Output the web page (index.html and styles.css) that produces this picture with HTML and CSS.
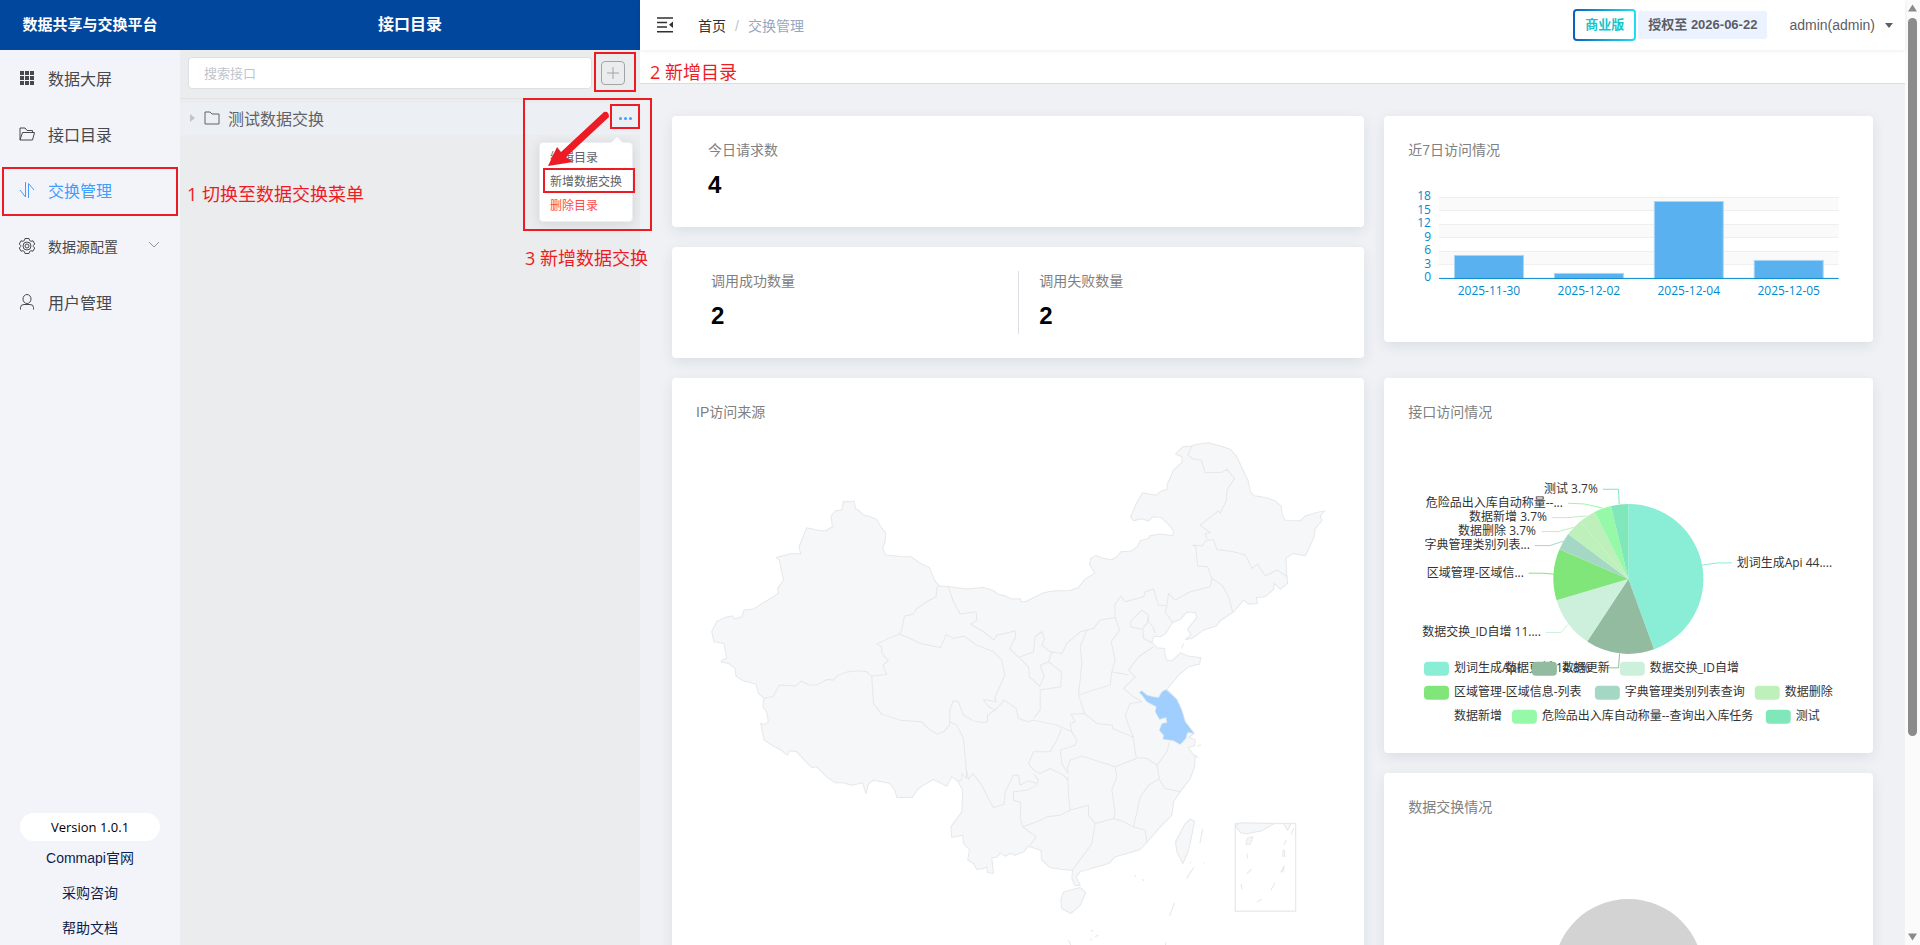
FILE: index.html
```html
<!DOCTYPE html>
<html lang="zh-CN">
<head>
  <meta charset="utf-8">
  <title>数据共享与交换平台</title>
  <link rel="stylesheet" href="styles.css">
</head>
<body>
  <div class="app">
    <aside class="sidebar">
      <h1 class="brand">数据共享与交换平台</h1>
      <nav class="menu">
        <a class="menu-item" href="#">
          <svg class="icon" viewBox="0 0 16 16" fill="currentColor"><path d="M1 1h4v4H1zM6 1h4v4H6zM11 1h4v4h-4zM1 6h4v4H1zM6 6h4v4H6zM11 6h4v4h-4zM1 11h4v4H1zM6 11h4v4H6zM11 11h4v4h-4z"/></svg>
          数据大屏
        </a>
        <a class="menu-item" href="#">
          <svg class="icon" viewBox="0 0 16 16" fill="none" stroke="currentColor"><path d="M1 14V2h5l2 2.500h5.500V6.500M1 14l2.500-7.500h12L13.500 14z"/></svg>
          接口目录
        </a>
        <a class="menu-item active" href="#">
          <svg class="icon" viewBox="0 0 16 16" fill="none" stroke="currentColor"><path d="M6.500 0v15L1 8M9.500 16V1.500L15 8"/></svg>
          交换管理
        </a>
        <a class="menu-item small" href="#">
          <svg class="icon" viewBox="0 0 16 16" fill="none" stroke="currentColor"><path d="M6 .5h4l.6 2 1.400.8 2-.5 1.700 3.200L14.300 7.500v1l1.400 1.500-1.700 3.200-2-.5-1.400.8-.6 2H6l-.6-2-1.400-.8-2 .5L.3 10l1.400-1.500v-1L.3 6 2 2.800l2 .5 1.400-.8z"/><circle cx="8" cy="8" r="4"/><circle cx="8" cy="8" r="2"/></svg>
          数据源配置
          <svg class="arrow" viewBox="0 0 12 12" fill="none" stroke="currentColor"><path d="M1 2l5 5 5-5"/></svg>
        </a>
        <a class="menu-item" href="#">
          <svg class="icon" viewBox="0 0 16 16" fill="none" stroke="currentColor"><ellipse cx="8" cy="5" rx="4" ry="4.500"/><path d="M1.500 15.500v-2q0-3 3.500-3h6q3.500 0 3.500 3v2"/></svg>
          用户管理
        </a>
      </nav>
      <div class="links">
        <span class="version">Version 1.0.1</span>
        <a href="#">Commapi官网</a>
        <a href="#">采购咨询</a>
        <a href="#">帮助文档</a>
      </div>
    </aside>

    <section class="tree">
      <h2 class="tree-title">接口目录</h2>
      <div class="tree-search">
        <input type="text" placeholder="搜索接口" aria-label="搜索接口">
        <button class="add" aria-label="新增目录">
          <svg viewBox="0 0 12 12" stroke="currentColor"><path d="M6 0v12M0 6h12"/></svg>
        </button>
      </div>
      <div class="tree-row">
        <span class="caret"></span>
        <svg class="folder" viewBox="0 0 16 14" fill="none" stroke="currentColor"><path d="M1 13V1h5l2 2h7v10z"/></svg>
        <span class="name">测试数据交换</span>
        <button class="more" aria-label="更多"><i></i><i></i><i></i></button>
        <div class="popover">
          <button>编辑目录</button>
          <button>新增数据交换</button>
          <button class="danger">删除目录</button>
        </div>
      </div>
    </section>

    <main class="main">
      <header class="navbar">
        <button class="fold" aria-label="收起菜单">
          <svg viewBox="0 0 16 16" fill="none" stroke="currentColor" stroke-width="1.500"><path d="M0 1h16M0 5.500h10M0 10h10M0 14.800h16"/><path d="M16 4.500v6.500l-4-3.200z" fill="currentColor" stroke="none"/></svg>
        </button>
        <div class="breadcrumb"><a href="#">首页</a><span class="slash">/</span><span>交换管理</span></div>
        <span class="edition">商业版</span>
        <span class="license">授权至 2026-06-22</span>
        <button class="user">admin(admin)<span class="down"></span></button>
      </header>
      <div class="tabs"></div>

      <div class="board">
        <div class="column">
          <div class="card stats">
            <div class="stat"><p>今日请求数</p><strong>4</strong></div>
          </div>
          <div class="card stats pair">
            <div class="stat"><p>调用成功数量</p><strong>2</strong></div>
            <div class="stat"><p>调用失败数量</p><strong>2</strong></div>
          </div>
          <div class="card">
            <h3>IP访问来源</h3>
            <svg class="map" viewBox="-12 -24 1932 1620">
              <path class="land" d="M430 213L435 217 440 213 450 216 462 213 466 235 478 243 490 255 512 261 530 268 545 295 557 308 555 335 548 355 556 374 600 379 632 380 670 405 688 412 703 450 718 468 744 469 800 477 850 472 880 482 895 493 915 497 935 507 960 506 963 514 976 515 1030 488 1060 483 1110 481 1135 472 1155 447 1184 429 1168 403 1172 385 1188 376 1205 384 1235 389 1250 380 1262 365 1295 363 1312 349 1320 332 1345 325 1347 318 1380 312 1418 317 1420 302 1405 283 1382 262 1358 260 1345 273 1325 266 1300 272 1291 261 1308 222 1327 188 1367 196 1385 182 1403 177 1400 165 1420 120 1445 98 1446 80 1426 72 1448 50 1473 48 1490 43 1525 38 1560 48 1590 58 1610 80 1628 120 1643 150 1650 185 1662 197 1700 203 1725 213 1743 228 1745 250 1755 271 1800 272 1815 258 1850 247 1873 243 1860 258 1865 272 1845 295 1840 325 1815 377 1780 370 1757 385 1760 440 1762 460 1740 478 1722 460 1720 478 1695 500 1668 502 1672 520 1645 522 1630 510 1600 545 1560 572 1548 588 1510 600 1475 625 1456 628 1472 615 1462 597 1490 562 1485 547 1460 546 1440 568 1417 577 1395 612 1380 620 1362 618 1355 635 1370 653 1393 655 1395 680 1400 690 1415 693 1440 668 1465 678 1502 683 1498 702 1465 710 1435 735 1400 778 1430 808 1445 845 1455 875 1482 910 1465 922 1485 928 1483 947 1463 952 1485 980 1483 1010 1470 1045 1440 1085 1420 1115 1415 1155 1380 1190 1340 1237 1320 1258 1280 1270 1245 1280 1225 1300 1140 1325 1128 1340 1140 1365 1125 1367 1115 1345 1117 1320 1080 1317 1050 1312 1025 1290 1022 1260 985 1248 970 1265 945 1275 930 1270 915 1278 900 1269 890 1281 875 1282 880 1330 862 1327 860 1309 850 1315 830 1318 820 1300 803 1290 808 1258 790 1240 788 1215 755 1222 752 1190 785 1145 788 1080 772 1052 755 1040 740 1068 700 1048 670 1065 650 1080 637 1102 590 1102 585 1082 570 1060 545 1055 520 1050 505 1062 497 1090 488 1058 455 1065 430 1058 405 1058 380 1040 350 1010 335 1012 315 992 290 965 270 962 262 975 240 958 220 948 192 930 182 880 195 883 205 875 200 845 188 830 192 805 175 790 168 762 130 752 108 738 105 715 85 700 62 695 68 689 80 685 72 640 42 635 35 605 50 575 75 562 97 557 103 567 125 560 132 540 160 537 200 512 235 490 233 475 245 458 250 450 238 390 228 382 275 370 302 372 297 350 320 293 350 300 375 303 397 290 393 258 405 243 425 240z"/>
              <path class="line" d="M718 468L710 472 708 500 685 512 650 535 638 553 613 558 605 600 597 612 560 627 530 642 545 650 545 670 565 692 548 705 560 733 515 738 500 725 475 722 440 726 415 735 400 750 380 748 350 765 325 764 305 753 285 768 238 765 220 798 192 805M744 469L760 515 780 552 828 545 830 570 812 583 850 605 882 630 890 615 915 610 945 602 947 620 928 655 955 682M597 612L620 620 660 640 722 652 738 613 760 625 792 618 830 645 880 665 905 690 914 735 885 800 888 815 850 808 865 830 885 840 862 855 862 875 845 877 822 873 790 855 775 815 760 812 750 835 748 885 730 905M515 738L520 820 545 852 600 870 665 875 690 900 712 912 730 905M748 875L770 885 790 925 797 1000 800 1045 785 1030 785 1050 772 1052M797 1010L805 1047 818 1030 845 1065 865 1105 880 1132 912 1122 915 1085 940 1035 955 1035 960 1065 985 1052 1010 1060M885 840L912 810 948 835 955 865 985 875 1000 870 1070 885 1115 905 1110 880 1125 875 1112 852 1153 850M1000 865L1020 840 1020 780 1082 770 1084 725 1045 695 1055 665M955 682L1000 665 1005 620 1025 605 1033 625 1025 645 1050 665 1085 670 1100 640 1140 605 1160 600M960 685L985 710 988 740 1018 768 1032 740 1020 705 1045 695M1160 600L1140 650 1145 700 1135 795 1153 850 1190 880 1237 885 1238 895 1285 915 1300 922 1285 885 1275 855 1290 820 1325 815M1160 600L1180 595 1200 570 1245 562 1258 600 1233 635 1245 690 1235 725 1230 765 1180 780 1135 795M1245 562L1243 525 1262 498 1275 515 1330 500 1335 485 1360 477 1375 525 1400 527 1405 490 1425 510 1470 485 1530 470 1535 445 1565 465 1585 500 1597 545M1400 527L1395 545 1417 577M1535 445L1522 410 1492 408 1487 350 1478 345 1505 348 1520 330 1540 330 1550 358 1600 365 1635 375 1655 415 1672 402 1695 438 1730 420 1762 440M1520 325L1515 310 1530 308 1500 285 1555 242 1560 250 1578 212 1580 180 1603 145 1580 118 1565 127 1515 128 1503 90 1480 88 1463 75 1475 48M1290 575L1325 540 1345 555 1340 580 1325 598 1292 590zM1345 558L1345 575 1358 590 1365 610M1328 598L1330 625 1355 638M1360 650L1315 680 1285 720 1305 740 1270 775 1300 800 1325 815M1235 725L1285 735M1300 922L1302 945 1308 982 1340 985 1370 1005 1400 965 1408 935M1115 905L1130 930 1125 945 1080 960 1085 1000 1103 1030 1103 1010 1110 990 1145 978 1215 1000 1245 1010 1308 985M1085 895L1070 930 1050 965 1000 965 985 1000 1000 1020 1020 1030 1050 1015 1090 1035 1103 1050M1000 1030L1015 1050 1010 1065 980 1080 940 1085 940 1110 962 1118 960 1160 968 1190 1010 1175 1040 1160 1080 1155 1110 1140 1105 1095 1103 1040M968 1190L1008 1220 990 1245M1108 1140L1165 1125 1165 1155 1185 1180 1240 1165 1245 1150 1235 1080 1250 1040 1245 1010M1185 1180L1175 1240 1117 1320M1240 1165L1270 1175 1300 1190 1320 1100 1345 1065 1378 1045 1370 1005M1378 1050L1395 1075 1440 1085M1300 1190L1335 1200 1340 1237"/>
              <path class="land" d="M1455 1180L1470 1167 1483 1173 1475 1215 1465 1260 1448 1300 1430 1265 1426 1235zM1090 1385L1140 1372 1157 1387 1140 1425 1112 1450 1085 1435 1082 1410z"/>
              <path class="hit" d="M1317 787L1325 782 1340 795 1358 800 1375 802 1385 785 1397 778 1430 808 1445 840 1455 875 1482 910 1462 907 1457 925 1440 943 1420 932 1388 927 1390 915 1377 900 1385 880 1400 877 1397 862 1378 868 1365 845 1368 830 1340 815 1325 795z"/>
              <rect class="inset" x="1605" y="1180" width="181" height="263"/>
              <path class="land" d="M1605 1187L1620 1178 1722 1180 1685 1202 1640 1211 1622 1208zM1750 1180h22l-10 20zM1637 1242l5-18 16-4-8 22z"/>
              <path class="line" d="M1780 1195l-8 18M1758 1230l-6 14M1748 1260h5v18h-5zM1752 1307l-10 18h6zM1724 1358l-12 22M1670 1415l14-8M1622 1362l4 16M1654 1316l-14 14M1640 1270l3 16M1507 1197l-8 43M1480 1312l-21 34M1423 1417l-15 40M1303 1335l4 4M1326 1347l5 5M1105 1530l7 15M1396 1537v8M1172 1500l8 3M1185 1520l10-6M1170 1528l6 2M1510 1296l3 3M1470 1296l3 3M1450 640l-6 15M1490 948l12-4M1485 975l8 8"/>
            </svg>
          </div>
        </div>

        <div class="column">
          <div class="card recent">
            <h3>近7日访问情况</h3>
            <svg class="chart visits" viewBox="0 0 441 158">
              <path fill="#fafafa" d="M31 37h400v13H31zM31 64h400v13H31zM31 91h400v13H31z"/>
              <path stroke="#eee" d="M31 37.500h400M31 50.500h400M31 64.500h400M31 77.500h400M31 91.500h400M31 104.500h400"/>
              <g fill="#5ab1ef" stroke="#a9d6f6">
                <rect x="46.500" y="95.500" width="69" height="23"/>
                <rect x="146.500" y="113.500" width="69" height="5"/>
                <rect x="246.500" y="41.500" width="69" height="77"/>
                <rect x="346.500" y="100.500" width="69" height="18"/>
              </g>
              <path stroke="#008acd" d="M31 118.500h400"/>
              <g class="axis" text-anchor="end">
                <text x="23" y="40">18</text>
                <text x="23" y="54">15</text>
                <text x="23" y="67">12</text>
                <text x="23" y="81">9</text>
                <text x="23" y="94">6</text>
                <text x="23" y="108">3</text>
                <text x="23" y="121">0</text>
              </g>
              <g class="axis" text-anchor="middle">
                <text x="81" y="135">2025-11-30</text>
                <text x="181" y="135">2025-12-02</text>
                <text x="281" y="135">2025-12-04</text>
                <text x="381" y="135">2025-12-05</text>
              </g>
            </svg>
          </div>

          <div class="card">
            <h3>接口访问情况</h3>
            <svg class="chart" viewBox="0 0 441 307">
              <path fill="#8aeed6" d="M220.500 157V82A75 75 0 0 1 246.200 227.500z"/>
              <path fill="#93bb9f" d="M220.500 157L246.200 227.500A75 75 0 0 1 179.300 219.700z"/>
              <path fill="#cdf0dc" d="M220.500 157L179.300 219.700A75 75 0 0 1 148.700 178.500z"/>
              <path fill="#80e67a" d="M220.500 157L148.700 178.500A75 75 0 0 1 151.600 127.300z"/>
              <path fill="#a5d7c5" d="M220.500 157L151.600 127.300A75 75 0 0 1 160.300 112.200z"/>
              <path fill="#bdf0bb" d="M220.500 157L160.300 112.200A75 75 0 0 1 172.300 99.500z"/>
              <path fill="#bdf0bb" d="M220.500 157L172.300 99.500A75 75 0 0 1 186.800 90z"/>
              <path fill="#96f9a8" d="M220.500 157L186.800 90A75 75 0 0 1 203.200 84z"/>
              <path fill="#80e7bb" d="M220.500 157L203.200 84A75 75 0 0 1 220.500 82z"/>
              <g fill="none">
                <path stroke="#8aeed6" d="M294.300 143.300L309.300 141H324"/>
                <path stroke="#93bb9f" d="M211.700 231.700L210.700 246H195"/>
                <path stroke="#cdf0dc" d="M160 202.700L153 210.700H138"/>
                <path stroke="#80e67a" d="M145.700 152.300L135.300 151.300H120.700"/>
                <path stroke="#a5d7c5" d="M155.300 119.300L142 123.700H126.700"/>
                <path stroke="#bdf0bb" d="M166.300 105.300L150.300 109.700H133.700M178.700 94L159.700 95.700H144"/>
                <path stroke="#96f9a8" d="M195.300 86.300L176.300 82 160.300 81.300"/>
                <path stroke="#80e7bb" d="M211.300 82L210.700 67.300H195"/>
              </g>
              <g class="label" text-anchor="end">
                <text x="190" y="71">测试 3.7%</text>
                <text x="155" y="85">危险品出入库自动称量--...</text>
                <text x="139" y="99">数据新增 3.7%</text>
                <text x="128" y="113">数据删除 3.7%</text>
                <text x="122" y="127">字典管理类别列表...</text>
                <text x="116" y="155">区域管理-区域信...</text>
                <text x="133" y="214">数据交换_ID自增 11....</text>
              </g>
              <g class="label">
                <text x="329" y="145">划词生成Api 44....</text>
                <text x="97" y="250">数据更新 14.8%</text>
              </g>
              <rect x="16" y="240" width="25" height="14" rx="4" fill="#8aeed6"/>
              <rect x="124" y="240" width="25" height="14" rx="4" fill="#93bb9f"/>
              <rect x="212" y="240" width="25" height="14" rx="4" fill="#cdf0dc"/>
              <rect x="16" y="264" width="25" height="14" rx="4" fill="#80e67a"/>
              <rect x="187" y="264" width="25" height="14" rx="4" fill="#a5d7c5"/>
              <rect x="347" y="264" width="25" height="14" rx="4" fill="#bdf0bb"/>
              <rect x="104" y="288" width="25" height="14" rx="4" fill="#96f9a8"/>
              <rect x="358" y="288" width="25" height="14" rx="4" fill="#80e7bb"/>
              <g class="label">
                <text x="46" y="250">划词生成Api</text>
                <text x="154" y="250">数据更新</text>
                <text x="242" y="250">数据交换_ID自增</text>
                <text x="46" y="274">区域管理-区域信息-列表</text>
                <text x="217" y="274">字典管理类别列表查询</text>
                <text x="377" y="274">数据删除</text>
                <text x="46" y="298">数据新增</text>
                <text x="134" y="298">危险品出入库自动称量--查询出入库任务</text>
                <text x="388" y="298">测试</text>
              </g>
            </svg>
          </div>

          <div class="card">
            <h3>数据交换情况</h3>
            <svg class="chart" viewBox="0 0 441 307">
              <circle cx="220.500" cy="157" r="75" fill="#d3d3d3"/>
            </svg>
          </div>
        </div>
      </div>
    </main>

    <div class="scrollbar">
      <svg viewBox="0 0 10 8"><path d="M5 0l5 8H0z"/></svg>
      <div class="track"><div class="thumb"></div></div>
      <svg viewBox="0 0 10 8"><path d="M0 0h10L5 8z"/></svg>
    </div>
  </div>

  <div class="guide">
    <div class="frame frame-menu"></div>
    <div class="frame frame-add"></div>
    <div class="frame frame-popover"></div>
    <div class="frame frame-more"></div>
    <div class="frame frame-exchange"></div>
    <svg class="pointer" viewBox="0 0 62 56"><path d="M0 55L9 36l4 5L56 1q5-1 5 5L18 46l7 5z"/></svg>
    <p class="step step-1">1 切换至数据交换菜单</p>
    <p class="step step-2">2 新增目录</p>
    <p class="step step-3">3 新增数据交换</p>
  </div>
</body>
</html>
```
FILE: styles.css
```css
* {
  box-sizing: border-box;
}

body {
  margin: 0;
  font-family: "Liberation Sans", "Noto Sans CJK SC", sans-serif;
  font-size: 14px;
  color: #303133;
  overflow: hidden;
}

h1, h2, h3, p {
  margin: 0;
  font-weight: normal;
}

a {
  color: inherit;
  text-decoration: none;
}

button {
  padding: 0;
  border: none;
  background: none;
  color: inherit;
  font: inherit;
  cursor: pointer;
}

svg {
  display: block;
}

.app {
  display: flex;
  height: 100vh;
  overflow: hidden;
}

/* left menu */
.sidebar {
  flex: 0 0 180px;
  display: flex;
  flex-direction: column;
  background: #f3f4f9;
}

.brand, .tree-title {
  height: 50px;
  line-height: 50px;
  background: #00479d;
  color: #fff;
  font-size: 15px;
  font-weight: bold;
  text-align: center;
}

.menu {
  flex: 1;
}

.menu-item {
  display: flex;
  align-items: center;
  height: 56px;
  padding: 0 20px 0 19px;
  font-size: 16px;
  color: #48494d;
}

.menu-item .icon {
  width: 16px;
  height: 16px;
  margin-right: 13px;
}

.menu-item.active {
  color: #409eff;
}

.menu-item.small {
  font-size: 14px;
}

.menu-item .arrow {
  width: 12px;
  height: 12px;
  margin-left: auto;
  color: #909399;
}

.links {
  display: flex;
  flex-direction: column;
  align-items: center;
  margin-bottom: -1px;
  line-height: 35px;
  color: #0e1f4d;
}

.version {
  width: 140px;
  border-radius: 14px;
  background: #fff;
  color: #000;
  font-family: "Open Sans", sans-serif;
  font-size: 13px;
  line-height: 28px;
  text-align: center;
}

/* interface tree */
.tree {
  flex: 0 0 460px;
  background: #ebecee;
}

.tree-title {
  font-size: 16px;
}

.tree-search {
  display: flex;
  align-items: center;
  gap: 9px;
  height: 49px;
  padding: 0 15px 2px 8px;
  border-bottom: 1px solid #e2e3e6;
}

.tree-search input {
  flex: 1;
  height: 32px;
  padding: 0 15px;
  border: 1px solid #dcdfe6;
  border-radius: 4px;
  background: #fff;
  font: inherit;
  font-size: 13px;
}

.tree-search input::placeholder {
  color: #c0c4cc;
}

.add {
  display: flex;
  align-items: center;
  justify-content: center;
  width: 24px;
  height: 24px;
  border: 1px solid #a3a4a6;
  border-radius: 4px;
  color: #a3a4a6;
}

.add svg {
  width: 12px;
  height: 12px;
}

.tree-row {
  position: relative;
  display: flex;
  align-items: center;
  height: 32px;
  margin-top: 4px;
  padding: 0 8px 2px 10px;
  background: #ecf0f5;
  font-size: 16px;
  color: #606266;
}

.caret {
  border: 4px solid transparent;
  border-left: 5px solid #c0c4cc;
  border-right: 0;
}

.folder {
  width: 16px;
  height: 14px;
  margin: 0 8px 0 9px;
}

.name {
  flex: 1;
}

.more {
  display: flex;
  gap: 2px;
}

.more i {
  width: 3px;
  height: 3px;
  border-radius: 2px;
  background: #409eff;
}

.popover {
  position: absolute;
  top: 39px;
  right: 7px;
  width: 94px;
  padding: 1px 10px 5px;
  border: 1px solid #ebeef5;
  border-radius: 4px;
  background: #fff;
  box-shadow: 0 2px 12px rgba(0, 0, 0, 0.1);
  font-size: 12px;
}

.popover::before {
  content: "";
  position: absolute;
  top: -6px;
  right: 9px;
  border: 6px solid transparent;
  border-top: 0;
  border-bottom-color: #fff;
}

.popover button {
  display: block;
  height: 24px;
  white-space: nowrap;
}

.popover .danger {
  color: #ff4949;
}

/* right part */
.main {
  flex: 1;
  min-width: 0;
  background: #eff1f5;
}

.navbar {
  position: relative;
  display: flex;
  align-items: center;
  height: 50px;
  padding: 0 12px 0 17px;
  background: #fff;
  box-shadow: 0 1px 4px rgba(0, 21, 41, 0.08);
}

.fold svg {
  width: 16px;
  height: 16px;
}

.breadcrumb {
  flex: 1;
  margin-left: 25px;
  color: #97a8be;
}

.breadcrumb a {
  color: #303133;
}

.slash {
  margin: 0 9px;
  color: #c0c4cc;
}

.edition {
  padding: 0 10px;
  border: 2px solid transparent;
  border-radius: 4px;
  background: linear-gradient(#fff, #fff) padding-box, linear-gradient(to right, #0b5fc0, #1fe0f0) border-box;
  color: #15c5cb;
  font-size: 13px;
  font-weight: bold;
  line-height: 28px;
}

.license {
  margin-left: 2px;
  padding: 0 10px;
  border-radius: 2px;
  background: #ecf3ff;
  color: #5a5e66;
  font-size: 13px;
  font-weight: bold;
  line-height: 28px;
}

.user {
  display: flex;
  align-items: center;
  gap: 10px;
  margin-left: 22px;
  color: #5a5e66;
}

.down {
  border: 4px solid transparent;
  border-top: 5px solid #5a5e66;
  border-bottom: 0;
}

.tabs {
  height: 34px;
  border-bottom: 1px solid #d8dce5;
  background: #fff;
}

.board {
  display: grid;
  grid-template-columns: 17fr 12fr;
  gap: 20px;
  padding: 32px;
}

.column {
  display: flex;
  flex-direction: column;
  gap: 20px;
}

.card {
  padding: 24px;
  border-radius: 4px;
  background: #fff;
  box-shadow: 0 4px 14px rgba(0, 40, 60, 0.09);
}

.card.recent {
  margin-bottom: 16px;
}

.card h3, .stat p {
  line-height: 20px;
  color: #808080;
  font-size: 14px;
}

.stats {
  display: flex;
  padding: 24px 0;
}

.stat {
  width: 50%;
  height: 63px;
  padding-left: 36px;
}

.pair .stat {
  padding-left: 39px;
}

.pair .stat + .stat {
  padding-left: 20px;
  border-left: 1px solid #dcdfe6;
}

.stat strong {
  display: block;
  margin-top: 11px;
  color: #000;
  font-size: 24px;
  line-height: 28px;
}

.chart, .map {
  width: 100%;
}

.axis {
  fill: #008acd;
  font-family: "Open Sans", sans-serif;
  font-size: 12px;
}

.label {
  fill: #333;
  font-family: "Open Sans", "Noto Sans CJK SC", sans-serif;
  font-size: 12px;
}

.land {
  fill: #f6f7f9;
  stroke: #e6e7e9;
  stroke-width: 3;
  stroke-linejoin: round;
}

.line {
  fill: none;
  stroke: #e6e7e9;
  stroke-width: 3;
  stroke-linejoin: round;
}

.hit {
  fill: #9fceff;
  stroke: #dfe5ea;
  stroke-width: 2;
}

.inset {
  fill: none;
  stroke: #eaeaea;
  stroke-width: 4;
}

.scrollbar {
  flex: 0 0 15px;
  display: flex;
  flex-direction: column;
  align-items: center;
  gap: 6px;
  padding: 4px 0;
  background: #fbfbfb;
  fill: #8b8b8b;
}

.scrollbar svg {
  width: 9px;
  height: 8px;
}

.track {
  flex: 1;
}

.thumb {
  width: 9px;
  height: 79%;
  border-radius: 5px;
  background: #8b8b8b;
}

/* step marks drawn over the page */
.guide {
  position: absolute;
  top: 0;
  left: 0;
  pointer-events: none;
}

.frame, .step, .pointer {
  position: absolute;
}

.frame {
  border: 2px solid #ed1c24;
}

.frame-menu {
  top: 167px;
  left: 2px;
  width: 176px;
  height: 49px;
}

.frame-add {
  top: 52px;
  left: 594px;
  width: 42px;
  height: 40px;
}

.frame-popover {
  top: 98px;
  left: 523px;
  width: 129px;
  height: 133px;
}

.frame-more {
  top: 104px;
  left: 610px;
  width: 30px;
  height: 25px;
}

.frame-exchange {
  top: 168px;
  left: 543px;
  width: 92px;
  height: 25px;
}

.pointer {
  top: 111px;
  left: 548px;
  width: 62px;
  height: 56px;
  fill: #ed1c24;
}

.step {
  color: #ed1c24;
  font-family: "Open Sans", "Noto Sans CJK SC", sans-serif;
  font-size: 18px;
  line-height: 24px;
  white-space: nowrap;
}

.step-1 {
  top: 182px;
  left: 187px;
}

.step-2 {
  top: 60px;
  left: 650px;
}

.step-3 {
  top: 246px;
  left: 525px;
}
```
